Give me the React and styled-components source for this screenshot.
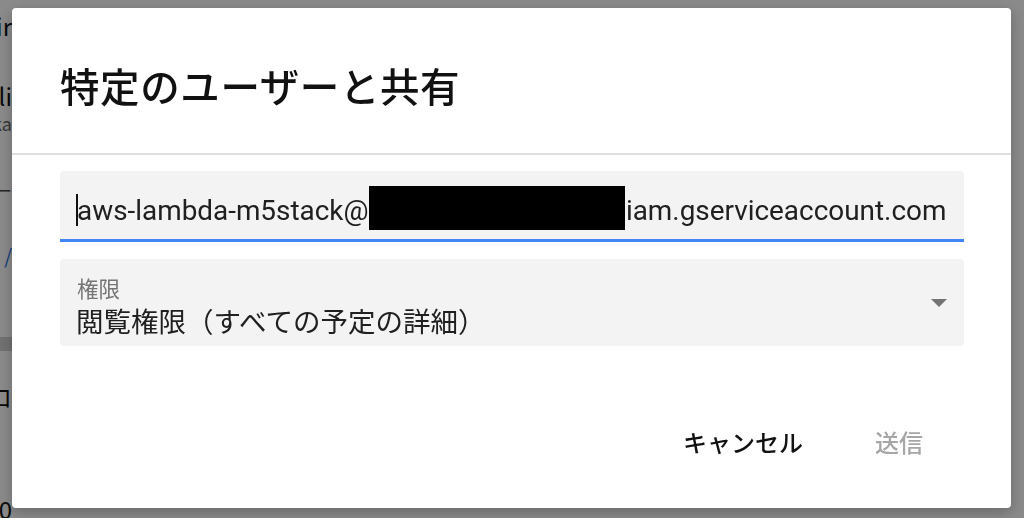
import React from 'react';
import styled, { createGlobalStyle } from 'styled-components';

const GlobalStyle = createGlobalStyle`
  html, body {
    margin: 0;
    padding: 0;
    background: #ffffff;
    font-family: Roboto, "Noto Sans CJK JP", sans-serif;
  }
`;

// Page behind the dialog (mostly hidden)
const Page = styled.div`
  width: 1024px;
  height: 518px;
  display: flex;
  overflow: hidden;
`;

const SideStrip = styled.div`
  width: 12px;
  overflow: hidden;
  display: flex;
  flex-direction: column;
`;

const StripText = styled.div`
  display: flex;
  justify-content: flex-end;
  white-space: nowrap;
  height: ${props => props.h}px;
  margin-top: ${props => props.mt || 0}px;
  flex-shrink: 0;
  align-items: center;
  font-size: ${props => props.size || 24}px;
  color: ${props => props.color || '#111'};
  font-family: "Noto Sans CJK JP", sans-serif;
`;

const StripBand = styled.div`
  height: 14px;
  flex-shrink: 0;
  margin-top: ${props => props.mt || 0}px;
  background: #d2d2d2;
`;

const Backdrop = styled.div`
  position: fixed;
  inset: 0;
  background: rgba(0, 0, 0, 0.46);
  display: flex;
  align-items: flex-start;
  padding: 8px 13px 0 12px;
`;

const Dialog = styled.div`
  width: 999px;
  height: 500px;
  background: #ffffff;
  border-radius: 4px;
  box-shadow: 0 4px 14px rgba(0, 0, 0, 0.25);
  display: flex;
  flex-direction: column;
`;

const Header = styled.div`
  height: 147px;
  display: flex;
  align-items: center;
  padding: 0 48px;
  border-bottom: 2px solid #e0e0e0;
  box-sizing: border-box;
`;

const Title = styled.h1`
  margin: 0;
  padding-top: 8px;
  font-family: "Noto Sans CJK JP", sans-serif;
  font-size: 39.5px;
  font-weight: 500;
  color: #111;
  letter-spacing: 0.6px;
`;

const Body = styled.div`
  padding: 16px 47px 0 48px;
  display: flex;
  flex-direction: column;
  gap: 17px;
`;

const EmailField = styled.div`
  height: 71px;
  background: #f3f3f3;
  border-radius: 4px 4px 0 0;
  border-bottom: 3px solid #4285f4;
  box-sizing: border-box;
  display: flex;
  align-items: center;
  padding: 10px 0 0 16px;
  font-family: Roboto, sans-serif;
  font-size: 27.9px;
  color: #202020;
  white-space: nowrap;
  overflow: hidden;
`;

const Caret = styled.span`
  display: inline-block;
  width: 2px;
  height: 32px;
  background: #111;
  margin-right: -1px;
`;

const Redacted = styled.span`
  display: inline-block;
  width: 256px;
  height: 44px;
  margin-top: -4px;
  background: #000;
  margin-right: -6px;
  position: relative;
  z-index: 1;
`;

const SelectField = styled.div`
  height: 87px;
  background: #f3f3f3;
  border-radius: 4px;
  display: flex;
  align-items: center;
  padding: 6px 17px 0 16px;
  box-sizing: border-box;
`;

const SelectText = styled.div`
  flex: 1;
  display: flex;
  flex-direction: column;
  font-family: "Noto Sans CJK JP", sans-serif;
`;

const SelectLabel = styled.div`
  font-size: 21.5px;
  line-height: 28px;
  color: #757575;
  padding-left: 1px;
`;

const SelectValue = styled.div`
  font-size: 27.5px;
  line-height: 36px;
  color: #202020;
`;

const Arrow = styled.div`
  width: 0;
  height: 0;
  border-left: 8px solid transparent;
  border-right: 8px solid transparent;
  border-top: 8px solid #737373;
  margin-top: -6px;
`;

const Actions = styled.div`
  margin-top: auto;
  height: 132px;
  display: flex;
  justify-content: flex-end;
  align-items: flex-start;
  padding: 48px 68px 0 0;
  box-sizing: border-box;
  gap: 32px;
`;

const Button = styled.button`
  background: none;
  border: none;
  padding: 0 20px;
  font-family: "Noto Sans CJK JP", sans-serif;
  font-size: 24px;
  font-weight: 500;
  color: ${props => (props.disabled ? '#a6a6a6' : '#111')};
  cursor: ${props => (props.disabled ? 'default' : 'pointer')};
`;

export default function App() {
  return (
    <>
      <GlobalStyle />
      <Page>
        <SideStrip>
          <StripText h={50}>Calendarir</StripText>
          <StripText h={30} mt={30}>Toolli</StripText>
          <StripText h={26} size={18} color="#666">Osaka</StripText>
          <StripText h={40} mt={34} size={18} color="#444">ユー</StripText>
          <StripText h={40} mt={25} size={20} color="#1a73e8">/</StripText>
          <StripBand mt={62} />
          <StripText h={50} mt={20}>ロ</StripText>
          <StripText h={50} mt={62}>10</StripText>
        </SideStrip>
      </Page>
      <Backdrop>
        <Dialog>
          <Header>
            <Title>特定のユーザーと共有</Title>
          </Header>
          <Body>
            <EmailField>
              <Caret />
              aws-lambda-m5stack@
              <Redacted />
              .iam.gserviceaccount.com
            </EmailField>
            <SelectField>
              <SelectText>
                <SelectLabel>権限</SelectLabel>
                <SelectValue>閲覧権限（すべての予定の詳細）</SelectValue>
              </SelectText>
              <Arrow />
            </SelectField>
          </Body>
          <Actions>
            <Button>キャンセル</Button>
            <Button disabled>送信</Button>
          </Actions>
        </Dialog>
      </Backdrop>
    </>
  );
}
